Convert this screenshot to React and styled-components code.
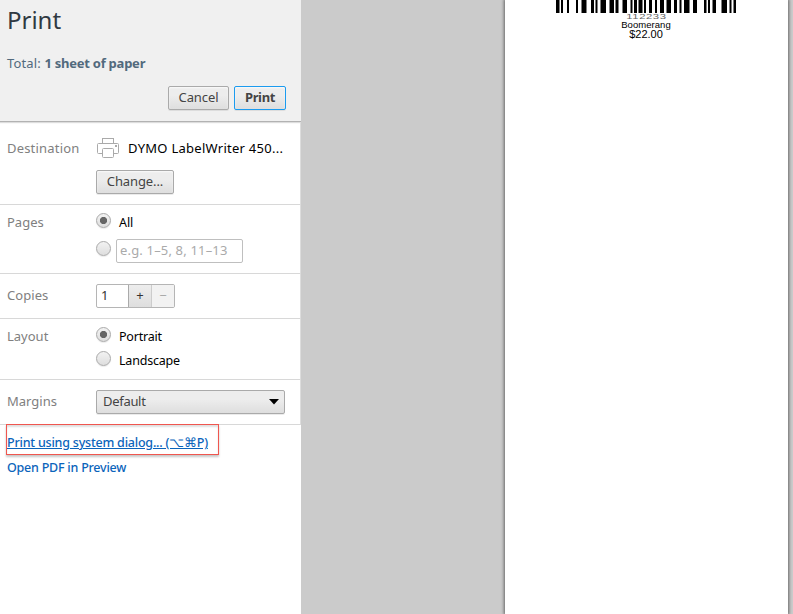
import React from 'react';
import styled, { createGlobalStyle } from 'styled-components';

const Global = createGlobalStyle`
  *, *::before, *::after { box-sizing: border-box; }
  body { margin: 0; overflow: hidden; background: #cbcbcb; font: 13px/20px "Noto Sans", "Open Sans", sans-serif; }
`;
const Page = styled.div`display: flex; width: 793px; height: 614px; overflow: hidden;`;
const Sidebar = styled.aside`width: 301px; flex: none; background: #fff; color: #000;`;
const Header = styled.header`
  height: 122px; background: #f0f0f0; border-bottom: 1px solid #b2b2b2; padding: 5px 15px 0 7px;
  box-shadow: 0 1px 1px #ddd; display: flex; flex-direction: column;
`;
const Title = styled.h1`margin: 0; font-size: 24px; line-height: 30px; font-weight: 400; color: #303942;`;
const Total = styled.div`margin-top: 18px; color: #526a7d;`;
const Text = styled.span`letter-spacing: ${p => p.$track || 0}px; white-space: nowrap;`;
const Bold = styled(Text)`font-weight: 700;`;
const Actions = styled.div`display: flex; justify-content: flex-end; gap: 5px; margin-top: 13px;`;
const Button = styled.button`
  width: ${p => p.$w}px; height: 24px; padding: 0 0 2px; border: 1px solid ${p => (p.$primary ? '#1b9bef' : '#aaa')};
  border-radius: 2px; background: linear-gradient(#ededed 38%, #dedede); color: #444;
  box-shadow: 0 1px 0 rgba(0,0,0,.08), inset 0 1px 2px rgba(255,255,255,.75);
  font: ${p => (p.$primary ? 700 : 400)} 13px/20px "Noto Sans", sans-serif;
`;
const Section = styled.section`
  display: grid; grid-template-columns: 89px 1fr; height: ${p => p.$h}px;
  padding: ${p => p.$top}px 15px 0 7px; border-bottom: 1px solid #d8d8d8; border-right: 1px solid #ddd;
`;
const Label = styled.div`color: #808080; padding-top: ${p => p.$drop || 0}px;`;
const Stack = styled.div`display: flex; flex-direction: column; align-items: flex-start; gap: ${p => p.$gap || 0}px;`;
const Printer = styled.div`display: flex; align-items: center; height: 22px; gap: 8px; svg { display: block; flex: none; }`;
const Option = styled.label`display: flex; align-items: flex-start; height: ${p => p.$h}px; gap: ${p => p.$gap}px;`;
const Radio = styled.span`
  width: 15px; height: 15px; flex: none; margin-top: ${p => p.$drop || 1}px; border: 1px solid #aaa; border-radius: 50%;
  background: ${p => (p.$on ? 'radial-gradient(circle, #666 0 3.2px, transparent 4px),' : '')} linear-gradient(#f2f2f2, #dedede);
  box-shadow: 0 1px 1px rgba(0,0,0,.08);
`;
const OptionText = styled(Text)`font-size: 12.5px; padding-top: 1px;`;
const Field = styled.div`
  width: ${p => p.$w}px; height: 24px; padding: 0 3px; border: 1px solid #bfbfbf; border-radius: 2px;
  color: ${p => p.$color}; line-height: 21px; background: #fff;
`;
const Stepper = styled.div`
  display: flex; width: 79px; height: 24px; border: 1px solid #b5b5b5; border-radius: 2px;
  overflow: hidden; line-height: 21px;
`;
const Count = styled.span`width: 31px; padding-left: 4px; color: #333;`;
const Step = styled.span`
  flex: 1; text-align: center; border-left: 1px solid ${p => (p.$off ? '#ccc' : '#aaa')};
  color: ${p => (p.$off ? '#aaa' : '#333')}; background: ${p => (p.$off ? '#f2f2f2' : 'linear-gradient(#ededed, #dedede)')};
`;
const Select = styled.div`
  display: flex; justify-content: space-between; align-items: center; width: 189px; height: 24px; padding: 0 5px 1px 6px;
  border: 1px solid #aaa; border-radius: 2px; background: linear-gradient(#ededed 38%, #dedede); color: #444;
  box-shadow: 0 1px 0 rgba(0,0,0,.08); line-height: 19px;
`;
const Links = styled.nav`display: flex; flex-direction: column; align-items: flex-start;`;
const Highlight = styled.div`
  width: 213px; height: 31px; margin: -1px 0 0 6px; border: 1px solid #f0564f;
  padding: 8px 0 0; box-shadow: 0 2px 2px rgba(0,0,0,.22), inset 0 2px 2px rgba(0,0,0,.13);
`;
const Link = styled.a`
  display: flex; align-items: center; color: #0b64bb; font-size: 12.5px; font-weight: 500;
  letter-spacing: ${p => p.$track || 0}px; white-space: nowrap;
  text-decoration: ${p => (p.$under ? 'underline' : 'none')}; margin: ${p => p.$m || 0};
`;
const Preview = styled.main`flex: 1; display: flex; padding-left: 204px; background: #cbcbcb;`;
const Paper = styled.article`
  width: 283px; height: 614px; background: #fff; box-shadow: 0 0 3px 1px rgba(0,0,0,.5);
  display: flex; flex-direction: column; align-items: center; color: #000; font-family: "Liberation Sans", Arial, sans-serif;
`;
const Bars = styled.svg`display: block; width: 180px; height: 13px; margin-right: 1px;`;
const Digits = styled.div`font-size: 7.5px; line-height: 7px; letter-spacing: .4px; color: #666; transform: scaleX(1.5);`;
const Product = styled.div`font-size: 9.5px; line-height: 10px; letter-spacing: .05px; margin-right: 1px;`;
const Price = styled.div`font-size: 11px; line-height: 9px; margin-right: 1px;`;

// Start and end of every bar, in pixels from the left end of the barcode.
const bars = [
  [0, 3.5], [5, 7], [11, 13], [20, 22], [25.5, 30.5], [35, 38], [39.5, 41.5], [44.5, 50], [53.5, 58], [59.5, 62.5],
  [66.5, 71], [74.5, 76.5], [78, 81], [82.5, 86.5], [88, 90], [93, 96], [99, 101], [104, 108], [110.5, 115], [118, 121],
  [123.5, 125.5], [128, 133.5], [137, 141], [148, 150.5], [152, 154], [156.5, 160], [165.5, 171], [173.5, 175.5], [177.5, 180],
];

export default function App() {
  return (
    <Page>
      <Global />
      <Sidebar>
        <Header>
          <Title><Text>Print</Text></Title>
          <Total><Text $track={0.14}>Total: </Text><Bold $track={-0.24}>1 sheet of paper</Bold></Total>
          <Actions>
            <Button $w={61}><Text $track={-0.1}>Cancel</Text></Button>
            <Button $w={52} $primary><Text $track={-0.35}>Print</Text></Button>
          </Actions>
        </Header>
        <Section $h={83} $top={15}>
          <Label $drop={1}><Text $track={0.19}>Destination</Text></Label>
          <Stack $gap={11}>
            <Printer>
              <svg width="24" height="22" viewBox="0 0 24 22" fill="#fff" stroke="#aaa">
                <rect x="6.5" y="1.5" width="11" height="6" />
                <rect x="1.5" y="6.5" width="21" height="10" rx="1" />
                <rect x="6.5" y="11.5" width="11" height="9" rx="1" />
                <path d="M19 9h2" strokeWidth="2" />
              </svg>
              <Text $track={0.27}>DYMO LabelWriter 450...</Text>
            </Printer>
            <Button $w={78}><Text $track={-0.1}>Change...</Text></Button>
          </Stack>
        </Section>
        <Section $h={69} $top={7}>
          <Label><Text>Pages</Text></Label>
          <Stack>
            <Option $h={27} $gap={8}><Radio $on /><OptionText $track={-0.1}>All</OptionText></Option>
            <Option $h={24} $gap={5}>
              <Radio $drop={2} />
              <Field $w={127} $color="#aaa"><Text $track={0.17}>e.g. 1–5, 8, 11–13</Text></Field>
            </Option>
          </Stack>
        </Section>
        <Section $h={45} $top={10}>
          <Label $drop={1}><Text $track={0.05}>Copies</Text></Label>
          <Stepper><Count>1</Count><Step>+</Step><Step $off>−</Step></Stepper>
        </Section>
        <Section $h={61} $top={7}>
          <Label><Text>Layout</Text></Label>
          <Stack>
            <Option $h={24} $gap={8}><Radio $on /><OptionText $track={-0.2}>Portrait</OptionText></Option>
            <Option $h={24} $gap={8}><Radio /><OptionText $track={-0.2}>Landscape</OptionText></Option>
          </Stack>
        </Section>
        <Section $h={45} $top={10}>
          <Label $drop={1}><Text>Margins</Text></Label>
          <Select><Text $track={-0.3}>Default</Text><svg width="10" height="6"><path d="M0 0H10L5 5.5Z" /></svg></Select>
        </Section>
        <Links>
          <Highlight><Link $under $track={-0.21}>Print using system dialog... (⌥⌘P)</Link></Highlight>
          <Link $m="3px 0 0 7px" $track={-0.23}>Open PDF in Preview</Link>
        </Links>
      </Sidebar>
      <Preview>
        <Paper>
          <Bars>{bars.map(([from, to]) => <rect key={from} x={from} y="0" width={to - from} height="13" />)}</Bars>
          <Digits>112233</Digits>
          <Product>Boomerang</Product>
          <Price>$22.00</Price>
        </Paper>
      </Preview>
    </Page>
  );
}
